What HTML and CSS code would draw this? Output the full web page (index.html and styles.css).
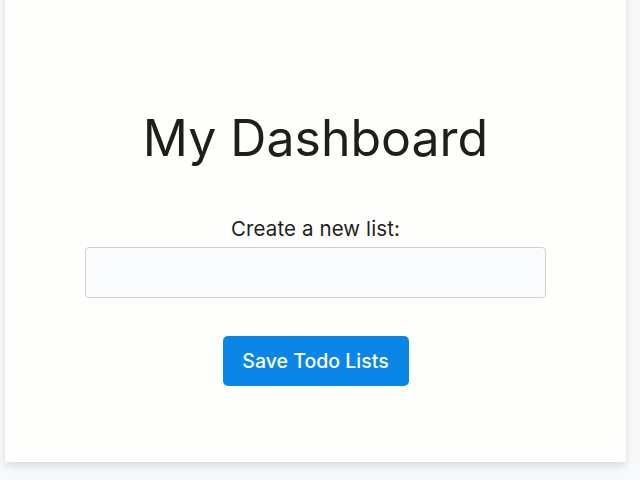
FILE: index.html
```html
<!DOCTYPE html>
<html>
<head>
<meta charset="utf-8">
<link rel="stylesheet" href="styles.css">
</head>
<body>
<div class="card">
  <h1 class="title">My Dashboard</h1>
  <label class="label" for="newlist">Create a new list:</label>
  <input class="input" id="newlist" type="text">
  <button class="btn">Save Todo Lists</button>
</div>
</body>
</html>
```

FILE: styles.css
```css
html, body {
  margin: 0;
  padding: 0;
  background: #f8f9fb;
  font-family: Inter, "Liberation Sans", sans-serif;
}
body {
  height: 480px;
  overflow: hidden;
}
.card {
  margin: -10px 14px 0 5px;
  height: 472px;
  box-sizing: border-box;
  background: #fefefc;
  box-shadow: 0 4px 8px rgba(0, 0, 0, 0.12);
  display: flex;
  flex-direction: column;
  align-items: center;
  padding-top: 118px;
}
.title {
  margin: 0;
  font-size: 50px;
  font-weight: 400;
  line-height: 60px;
  color: #1e1f1a;
}
.label {
  margin-top: 49px;
  font-size: 20.5px;
  line-height: 24px;
  letter-spacing: 0.1px;
  color: #1e1f1a;
}
.input {
  margin-top: 6px;
  width: 461px;
  height: 51px;
  box-sizing: border-box;
  border: 1px solid #d2d2cc;
  border-radius: 4px;
  background: #fafbfd;
}
.btn {
  margin-top: 38px;
  width: 186px;
  height: 50px;
  border: none;
  border-radius: 5px;
  background: #0a86e6;
  color: #ffffff;
  font-family: Inter, "Liberation Sans", sans-serif;
  font-size: 19.5px;
  font-weight: 500;
  padding: 0;
}
```
